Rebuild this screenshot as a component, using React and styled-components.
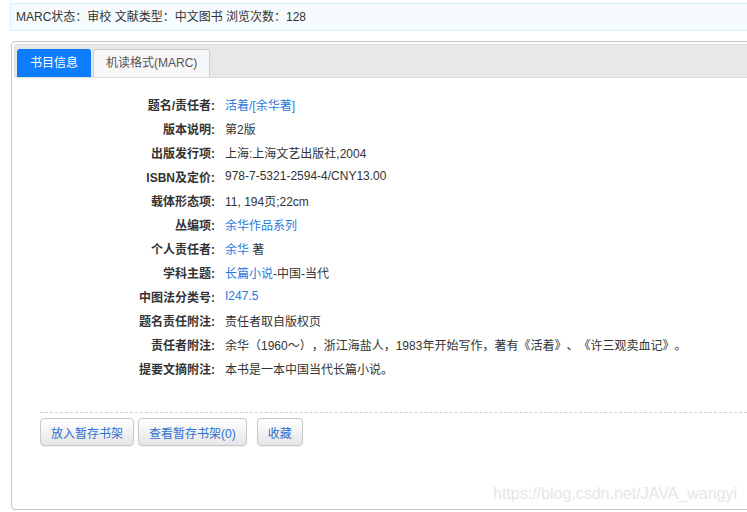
import styled, { createGlobalStyle } from 'styled-components';

const GlobalStyle = createGlobalStyle`
  html, body {
    margin: 0;
    padding: 0;
    overflow: hidden;
    background: #fff;
  }
  body {
    font-family: "Liberation Sans", Arial, "Noto Sans CJK SC", sans-serif;
    font-size: 12px;
    color: #333;
    text-spacing-trim: space-all;
  }
`;

const Page = styled.div`
  position: relative;
  width: 780px;
  height: 512px;
  padding: 3px 0 0 10px;
  box-sizing: border-box;
`;

const InfoBar = styled.div`
  height: 28px;
  box-sizing: border-box;
  border: 1px solid #d7f0fa;
  background: #f5fbff;
  padding: 0 5px;
  line-height: 26px;
  font-size: 12px;
  color: #333;
  white-space: nowrap;
`;

const Panel = styled.div`
  margin-top: 10px;
  margin-left: 1px;
  height: 469px;
  box-sizing: border-box;
  border: 1px solid #c6c6c6;
  border-radius: 4px;
  padding: 2px;
`;

const TabBar = styled.div`
  display: flex;
  align-items: flex-end;
  gap: 2px;
  height: 34px;
  box-sizing: border-box;
  border: 1px solid #dcdcdc;
  border-radius: 3px;
  background: #e8e8e8;
  padding: 4px 0 0 2px;
`;

const Tab = styled.div`
  height: 28px;
  box-sizing: border-box;
  padding: 0 12px;
  line-height: 27px;
  font-size: 12px;
  border-radius: 3px 3px 0 0;
  border: 1px solid ${(p) => (p.$active ? '#0a78fa' : '#d0d0d0')};
  border-bottom: none;
  background: ${(p) => (p.$active ? '#0d7cfd' : '#f7f7f7')};
  color: ${(p) => (p.$active ? '#fff' : '#555')};
  white-space: nowrap;
`;

const Detail = styled.div`
  display: grid;
  grid-template-columns: 201px 1fr;
  column-gap: 10px;
  grid-auto-rows: 24px;
  padding-top: 14px;
  align-items: center;
`;

const Label = styled.div`
  text-align: right;
  font-weight: bold;
  color: #333;
  white-space: nowrap;
`;

const Value = styled.div`
  color: #333;
  white-space: nowrap;
`;

const Link = styled.a`
  color: #2a78dc;
  text-decoration: none;
`;

const Divider = styled.div`
  margin: 32px 0 0 26px;
  border-top: 1px dashed #cfcfcf;
`;

const ButtonRow = styled.div`
  display: flex;
  margin: 5px 0 0 26px;
`;

const Button = styled.button`
  height: 28px;
  box-sizing: border-box;
  margin-left: ${(p) => p.$gap || 0}px;
  padding: 0 10px;
  border: 1px solid #c8c8c8;
  border-radius: 4px;
  background: linear-gradient(to bottom, #ffffff, #e6e6e6);
  color: #2f6fd0;
  font-family: "Liberation Sans", Arial, "Noto Sans CJK SC", sans-serif;
  font-size: 12px;
  cursor: pointer;
  box-shadow: 0 1px 1px rgba(0, 0, 0, 0.06);
`;

const Watermark = styled.div`
  position: absolute;
  left: 493px;
  top: 485px;
  font-family: "Liberation Sans", Arial, sans-serif;
  font-size: 16px;
  color: #e6e6e6;
  white-space: nowrap;
`;

const rows = [
  ['题名/责任者:', <Link href="#">活着/[余华著]</Link>],
  ['版本说明:', '第2版'],
  ['出版发行项:', '上海:上海文艺出版社,2004'],
  ['ISBN及定价:', '978-7-5321-2594-4/CNY13.00'],
  ['载体形态项:', '11, 194页;22cm'],
  ['丛编项:', <Link href="#">余华作品系列</Link>],
  ['个人责任者:', <><Link href="#">余华</Link> 著</>],
  ['学科主题:', <><Link href="#">长篇小说</Link>-中国-当代</>],
  ['中图法分类号:', <Link href="#">I247.5</Link>],
  ['题名责任附注:', '责任者取自版权页'],
  ['责任者附注:', '余华（1960～），浙江海盐人，1983年开始写作，著有《活着》、《许三观卖血记》。'],
  ['提要文摘附注:', '本书是一本中国当代长篇小说。'],
];

const App = () => {
  return (
    <Page>
      <GlobalStyle />
      <InfoBar>MARC状态：审校 文献类型：中文图书 浏览次数：128</InfoBar>
      <Panel>
        <TabBar>
          <Tab $active>书目信息</Tab>
          <Tab>机读格式(MARC)</Tab>
        </TabBar>
        <Detail>
          {rows.map(([label, value]) => (
            <>
              <Label key={label}>{label}</Label>
              <Value>{value}</Value>
            </>
          ))}
        </Detail>
        <Divider />
        <ButtonRow>
          <Button>放入暂存书架</Button>
          <Button $gap={4}>查看暂存书架(0)</Button>
          <Button $gap={10}>收藏</Button>
        </ButtonRow>
      </Panel>
      <Watermark>https://blog.csdn.net/JAVA_wangyi</Watermark>
    </Page>
  );
};

export default App;
